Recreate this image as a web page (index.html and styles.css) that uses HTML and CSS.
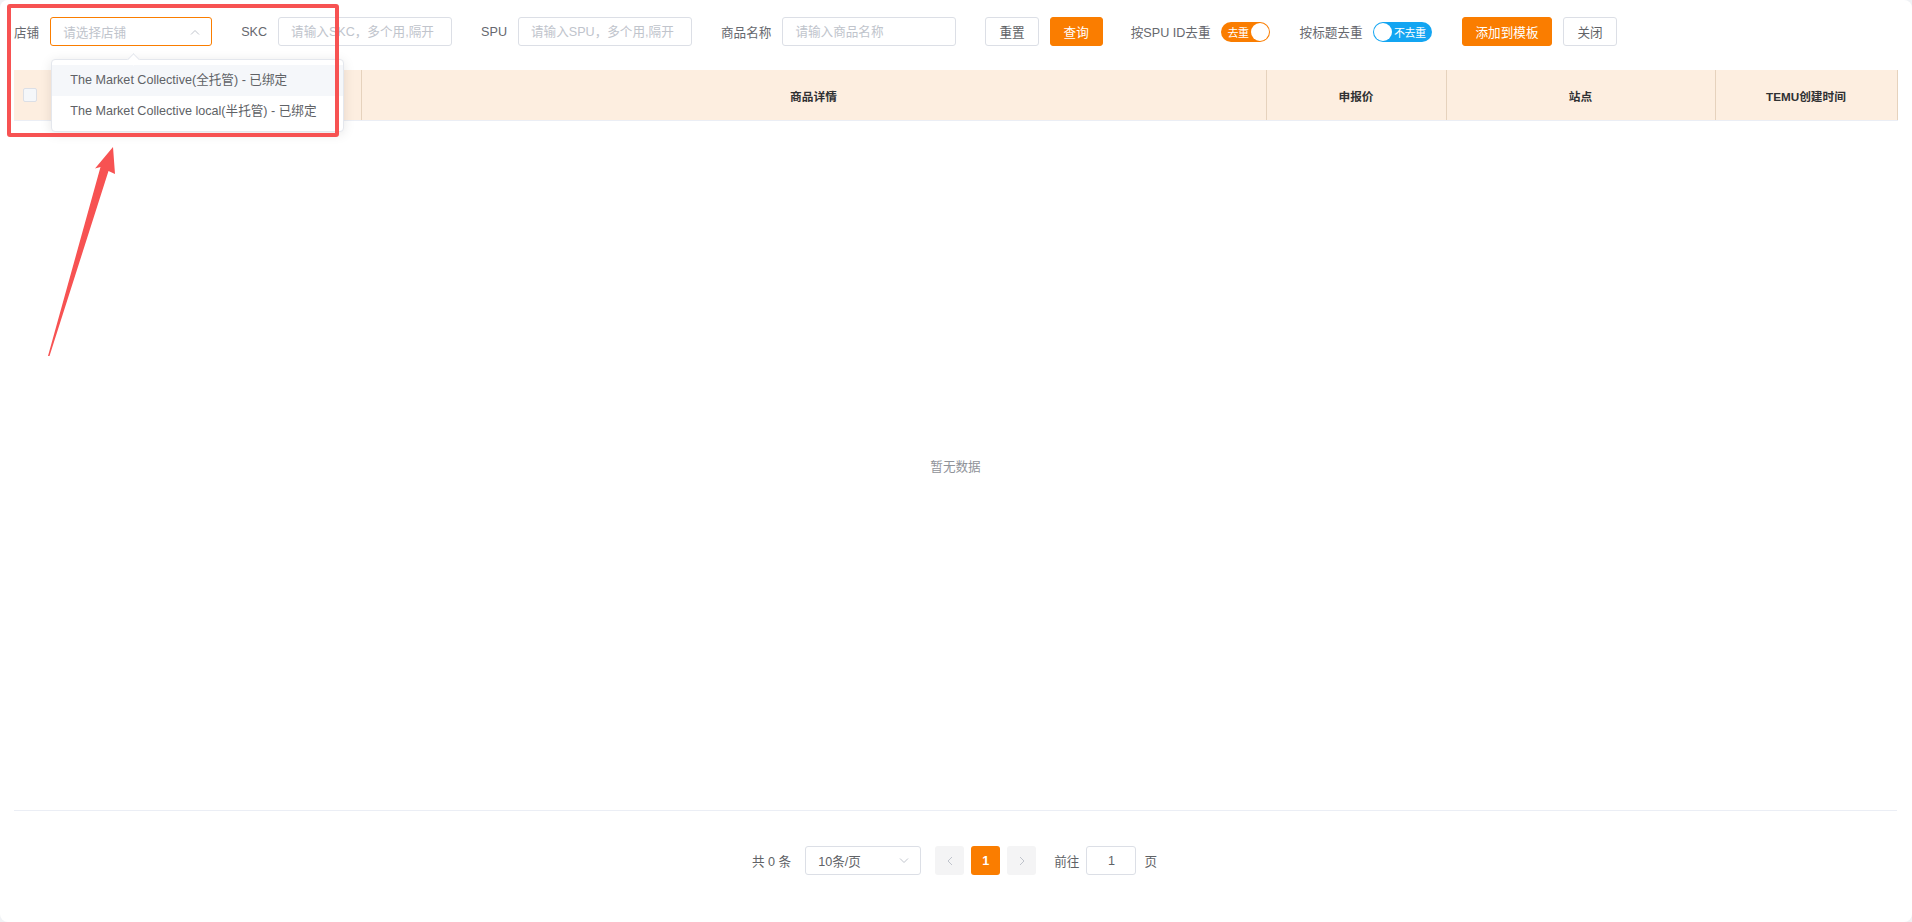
FILE: index.html
```html
<!DOCTYPE html>
<html lang="zh-CN">
<head>
  <meta charset="UTF-8">
  <title>选择商品</title>
  <link rel="stylesheet" href="styles.css">
</head>
<body>
  <div class="page">
    <!-- Filterzeile -->
    <div class="filter-bar">
      <div class="form-item">
        <label>店铺</label>
        <div class="select is-focus">
          <span class="placeholder">请选择店铺</span>
          <svg class="chevron" width="10" height="6" viewBox="0 0 10 6"><path d="M1 5.5L5 1.5L9 5.5" fill="none" stroke="#c0c4cc" stroke-width="1"/></svg>
          <div class="dropdown">
            <ul>
              <li class="hover">The Market Collective(全托管) - 已绑定</li>
              <li>The Market Collective local(半托管) - 已绑定</li>
            </ul>
          </div>
        </div>
      </div>
      <div class="form-item">
        <label>SKC</label>
        <input class="input" type="text" placeholder="请输入SKC，多个用,隔开">
      </div>
      <div class="form-item">
        <label>SPU</label>
        <input class="input" type="text" placeholder="请输入SPU，多个用,隔开">
      </div>
      <div class="form-item">
        <label>商品名称</label>
        <input class="input" type="text" placeholder="请输入商品名称">
      </div>
      <div class="button-group">
        <button class="btn">重置</button>
        <button class="btn btn-primary">查询</button>
      </div>
      <div class="form-item switch-item">
        <label>按SPU ID去重</label>
        <span class="switch is-on"><span class="switch-text">去重</span><span class="knob"></span></span>
      </div>
      <div class="form-item switch-item">
        <label>按标题去重</label>
        <span class="switch is-off"><span class="knob"></span><span class="switch-text">不去重</span></span>
      </div>
      <div class="button-group">
        <button class="btn btn-primary">添加到模板</button>
        <button class="btn">关闭</button>
      </div>
    </div>

    <!-- Tabelle -->
    <table class="table">
      <colgroup>
        <col style="width:48px">
        <col style="width:299px">
        <col style="width:905px">
        <col style="width:180px">
        <col style="width:269px">
        <col style="width:182px">
      </colgroup>
      <thead>
        <tr>
          <th><span class="checkbox"></span></th>
          <th></th>
          <th>商品详情</th>
          <th>申报价</th>
          <th>站点</th>
          <th>TEMU创建时间</th>
        </tr>
      </thead>
      <tbody>
        <tr>
          <td class="empty" colspan="6">暂无数据</td>
        </tr>
      </tbody>
    </table>

    <!-- Seitennavigation -->
    <div class="pagination">
      <span class="total">共 0 条</span>
      <div class="page-size">
        <span>10条/页</span>
        <svg width="10" height="6" viewBox="0 0 10 6"><path d="M1 0.5L5 4.5L9 0.5" fill="none" stroke="#c0c4cc" stroke-width="1"/></svg>
      </div>
      <div class="pager">
        <span class="pager-btn"><svg width="6" height="10" viewBox="0 0 6 10"><path d="M5 1L1 5L5 9" fill="none" stroke="#c0c4cc" stroke-width="1"/></svg></span>
        <span class="pager-btn active">1</span>
        <span class="pager-btn"><svg width="6" height="10" viewBox="0 0 6 10"><path d="M1 1L5 5L1 9" fill="none" stroke="#c0c4cc" stroke-width="1"/></svg></span>
      </div>
      <span class="jump">前往</span>
      <input class="jump-input" type="text" value="1">
      <span class="jump-unit">页</span>
    </div>

    <!-- Markierung -->
    <div class="mark-box"></div>
    <svg class="mark-arrow" width="130" height="370" viewBox="0 0 130 370">
      <polygon points="113,147 115,174 108.5,171 49.5,356 48,356 100.5,167 95,168.5" fill="#f75252"/>
    </svg>
  </div>
</body>
</html>
```

FILE: styles.css
```css
/* Grundlayout */
body {
  margin: 0;
  background-color: #f0f2f5;
  font-family: "Liberation Sans", "Noto Sans CJK SC", sans-serif;
  font-size: 12.6px;
  color: #606266;
}
.page {
  position: relative;
  height: 100vh;
  box-sizing: border-box;
  padding: 17px 15px 0 14px;
  background-color: #ffffff;
  border-radius: 8px;
}

/* Filterzeile */
.filter-bar {
  display: flex;
  align-items: center;
  height: 29px;
}
.form-item {
  display: flex;
  align-items: center;
  gap: 11px;
  margin-right: 29px;
}
.form-item label {
  color: #66686e;
  font-weight: normal;
  white-space: nowrap;
}
.switch-item {
  gap: 10px;
  margin-right: 30px;
}
.input {
  width: 174px;
  height: 29px;
  box-sizing: border-box;
  padding: 0 12px;
  border: 1px solid #dcdfe6;
  border-radius: 3px;
  font-family: inherit;
  font-size: 12.6px;
  color: #606266;
  outline: none;
}
.input::placeholder {
  color: #c0c4cc;
}
.select {
  position: relative;
  width: 162px;
  height: 29px;
  box-sizing: border-box;
  padding: 0 11px 0 12px;
  border: 1px solid #dcdfe6;
  border-radius: 3px;
  display: flex;
  align-items: center;
  justify-content: space-between;
}
.select.is-focus {
  border-color: #fa7d00;
}
.select .placeholder {
  color: #c0c4cc;
}
.dropdown {
  position: absolute;
  left: 0;
  top: 41px;
  width: 293px;
  background-color: #ffffff;
  border: 1px solid #e4e7ed;
  border-radius: 4px;
  box-shadow: 0 2px 12px rgba(0, 0, 0, 0.1);
  box-sizing: border-box;
  z-index: 5;
}
.dropdown::before {
  content: "";
  position: absolute;
  left: 77px;
  top: -5px;
  width: 8px;
  height: 8px;
  background-color: #ffffff;
  border-left: 1px solid #e4e7ed;
  border-top: 1px solid #e4e7ed;
  transform: rotate(45deg);
}
.dropdown ul {
  list-style: none;
  margin: 0;
  padding: 5px 0;
}
.dropdown li {
  height: 30.6px;
  line-height: 30.6px;
  padding: 0 18px;
  white-space: nowrap;
  color: #606266;
}
.dropdown li.hover {
  background-color: #f5f7fa;
}

/* Buttons */
.button-group {
  display: flex;
  gap: 11px;
  margin-right: 28px;
}
.btn {
  height: 29px;
  padding: 0 13px;
  border: 1px solid #dcdfe6;
  border-radius: 3px;
  background-color: #ffffff;
  font-family: inherit;
  font-size: 12.6px;
  color: #606266;
}
.btn-primary {
  background-color: #fa7d00;
  border-color: #fa7d00;
  color: #ffffff;
}

/* Schalter */
.switch {
  position: relative;
  height: 20px;
  border-radius: 10px;
  display: flex;
  align-items: center;
  box-sizing: border-box;
  padding: 0 1px;
  font-size: 11px;
  color: #ffffff;
}
.switch.is-on {
  width: 49px;
  background-color: #fa7d00;
  justify-content: space-between;
  padding-left: 7px;
}
.switch.is-off {
  width: 59px;
  background-color: #13a5f2;
  justify-content: space-between;
  padding-right: 6px;
}
.knob {
  width: 18px;
  height: 18px;
  border-radius: 50%;
  background-color: #ffffff;
}
.switch-text {
  letter-spacing: -0.5px;
}

/* Tabelle */
.table {
  width: 1883px;
  margin-top: 24px;
  border-collapse: collapse;
  table-layout: fixed;
}
.table th {
  height: 50px;
  padding: 0;
  background-color: #fdeee0;
  border-right: 1px solid #e6d2bd;
  border-bottom: 1px solid #ebeef5;
  font-size: 11.7px;
  font-weight: bold;
  color: #303133;
  text-align: center;
}
.table th:first-child {
  text-align: left;
  padding-left: 9px;
}
.checkbox {
  display: inline-block;
  width: 12px;
  height: 12px;
  border: 1px solid #dcdfe6;
  border-radius: 2px;
  background-color: #f5f7fa;
  vertical-align: middle;
}
.table td.empty {
  height: 687px;
  text-align: center;
  color: #909399;
  border-bottom: 1px solid #ebeef5;
}

/* Seitennavigation */
.pagination {
  display: flex;
  align-items: center;
  justify-content: center;
  height: 29px;
  margin-top: 35px;
  padding-right: 2px;
}
.total {
  margin-right: 14px;
}
.page-size {
  width: 116px;
  height: 29px;
  box-sizing: border-box;
  padding: 0 11px 0 12px;
  border: 1px solid #dcdfe6;
  border-radius: 3px;
  display: flex;
  align-items: center;
  justify-content: space-between;
  margin-right: 14px;
}
.pager {
  display: flex;
  gap: 7px;
  margin-right: 18px;
}
.pager-btn {
  width: 29px;
  height: 29px;
  border-radius: 3px;
  background-color: #f4f4f5;
  display: flex;
  align-items: center;
  justify-content: center;
}
.pager-btn.active {
  background-color: #fa7d00;
  color: #ffffff;
  font-weight: bold;
}
.jump-input {
  width: 50px;
  height: 29px;
  box-sizing: border-box;
  margin: 0 8px 0 7px;
  border: 1px solid #dcdfe6;
  border-radius: 3px;
  text-align: center;
  font-family: inherit;
  font-size: 12.6px;
  color: #606266;
  outline: none;
}

/* Markierung (Rahmen und Pfeil) */
.mark-box {
  position: absolute;
  left: 7px;
  top: 4px;
  width: 332px;
  height: 133px;
  box-sizing: border-box;
  border: 4px solid #f75252;
  border-radius: 3px;
  z-index: 6;
}
.mark-arrow {
  position: absolute;
  left: 0;
  top: 0;
  z-index: 6;
}
```
